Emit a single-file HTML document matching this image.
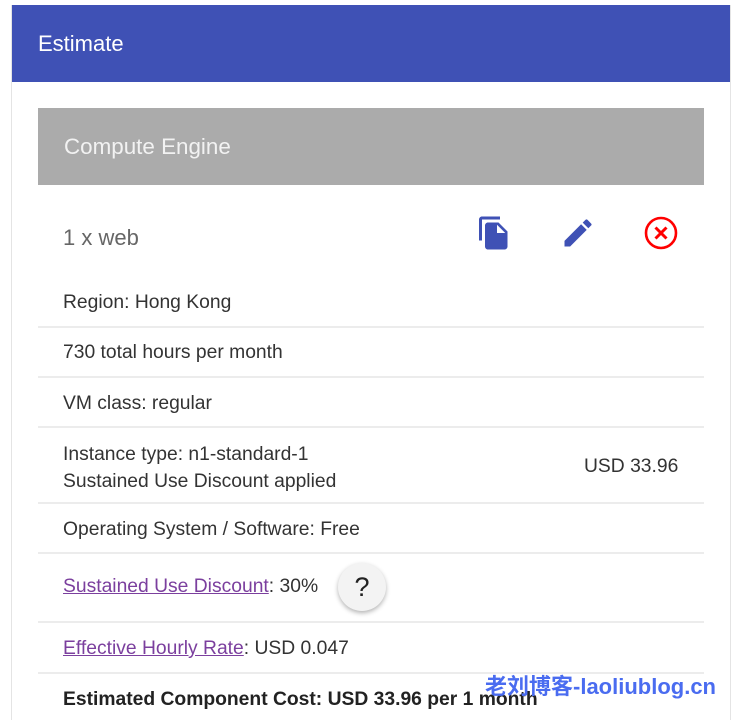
<!DOCTYPE html>
<html><head><meta charset="utf-8"><style>
html,body{margin:0;width:744px;height:720px;overflow:hidden}
body{background:#fff;position:relative;font-family:"Liberation Sans",Arial,sans-serif;color:#222}
.a{position:absolute}
.card{left:11px;top:5px;width:720px;height:715px;border-left:1px solid #e4e4e4;border-right:1px solid #e4e4e4;box-sizing:border-box}
.hdr{left:12px;top:5px;width:718px;height:77px;background:#3f51b5;color:#fff;font-size:22px;line-height:77px;padding-left:26px;box-sizing:border-box}
.ce{left:38px;top:108px;width:666px;height:77px;background:#ababab;color:#f2f2f2;font-size:22.4px;line-height:77px;padding-left:26px;box-sizing:border-box}
.t{left:63px;font-size:19.3px;color:#333;white-space:nowrap}
.ln{left:38px;width:666px;height:2px;background:#ececec}
a{color:#7b3f9e;text-decoration:underline}
.q{left:338px;top:563px;width:48px;height:48px;border-radius:50%;background:#f3f3f3;box-shadow:0 2px 5px rgba(0,0,0,.3);font-size:27px;text-align:center;line-height:48px;color:#222}
</style></head><body>
<div class="a card"></div>
<div class="a hdr">Estimate</div>
<div class="a ce">Compute Engine</div>
<div class="a t" style="top:225px;font-size:22px;color:#666">1 x web</div>
<svg class="a" style="left:476px;top:215px" width="36" height="36" viewBox="0 0 24 24"><path fill="#3f51b5" d="M16 1H4c-1.1 0-2 .9-2 2v14h2V3h12V1zm-1 4l6 6v10c0 1.1-.9 2-2 2H8c-1.1 0-2-.9-2-2V7c0-1.1.9-2 2-2h7zm-1 7h5.5L14 6.5V12z"/></svg>
<svg class="a" style="left:560px;top:215px" width="36" height="36" viewBox="0 0 24 24"><path fill="#3f51b5" d="M3 17.25V21h3.75L17.81 9.94l-3.75-3.75L3 17.25zM20.71 7.04a1 1 0 0 0 0-1.41l-2.34-2.34a1 1 0 0 0-1.41 0l-1.83 1.83 3.75 3.75 1.83-1.83z"/></svg>
<svg class="a" style="left:643px;top:215px" width="36" height="36" viewBox="0 0 36 36"><circle cx="18" cy="18" r="15" fill="none" stroke="#f00" stroke-width="2.6"/><path d="M12.5 12.5l11 11M23.5 12.5l-11 11" stroke="#f00" stroke-width="3"/></svg>
<div class="a t" style="top:292px">Region: Hong Kong</div>
<div class="a ln" style="top:326px"></div>
<div class="a t" style="top:342px">730 total hours per month</div>
<div class="a ln" style="top:376px"></div>
<div class="a t" style="top:393px">VM class: regular</div>
<div class="a ln" style="top:426px"></div>
<div class="a t" style="top:441px;line-height:27px">Instance type: n1-standard-1<br>Sustained Use Discount applied</div>
<div class="a t" style="top:456px;left:584px">USD 33.96</div>
<div class="a ln" style="top:502px"></div>
<div class="a t" style="top:519px">Operating System / Software: Free</div>
<div class="a ln" style="top:552px"></div>
<div class="a t" style="top:576px"><a>Sustained Use Discount</a>: 30%</div>
<div class="a q">?</div>
<div class="a ln" style="top:621px"></div>
<div class="a t" style="top:638px"><a>Effective Hourly Rate</a>: USD 0.047</div>
<div class="a ln" style="top:672px"></div>
<div class="a t" style="top:689px;font-weight:bold;color:#222">Estimated Component Cost: USD 33.96 per 1 month</div>
<div class="a" style="left:485px;top:669px;font-size:22px;font-weight:bold;color:#4a6cf0;font-family:'Liberation Sans','Noto Sans CJK SC',sans-serif">老刘博客-laoliublog.cn</div>
</body></html>
